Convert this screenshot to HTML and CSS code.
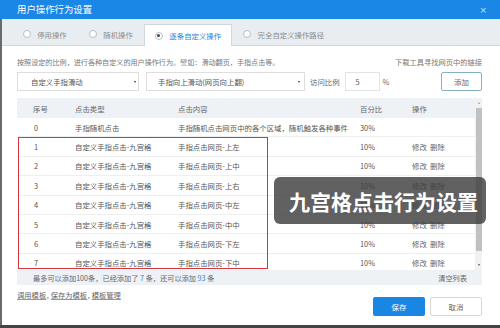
FILE: index.html
```html
<!DOCTYPE html>
<html lang="zh-CN">
<head>
<meta charset="utf-8">
<title>用户操作行为设置</title>
<link rel="stylesheet" href="styles.css">
</head>
<body>
<div class="dialog">
  <div class="titlebar">
    <span class="title">用户操作行为设置</span>
    <span class="close">×</span>
  </div>
  <div class="main">
    <div class="tabs">
      <div class="tab"><span class="radio"></span>停用操作</div>
      <div class="tab"><span class="radio"></span>随机操作</div>
      <div class="tab active"><span class="radio on"></span>逐条自定义操作</div>
      <div class="tab"><span class="radio"></span>完全自定义操作路径</div>
    </div>
    <div class="body">
      <div class="desc">
        <span>按照设定的比例，进行各种自定义的用户操作行为。譬如：滑动翻页，手指点击等。</span>
        <span class="dl">下载工具寻找网页中的链接</span>
      </div>
      <div class="controls">
        <div class="select s1"><span>自定义手指滑动</span><span class="arrow"></span></div>
        <div class="select s2"><span>手指向上滑动(网页向上翻)</span><span class="arrow"></span></div>
        <span class="lbl">访问比例</span>
        <div class="input">5</div>
        <span class="pct">%</span>
        <div class="btn-add">添加</div>
      </div>
      <div class="table">
        <div class="tmain">
          <div class="row head">
            <span class="c1">序号</span><span>点击类型</span><span>点击内容</span><span>百分比</span><span>操作</span>
          </div>
          <div class="row"><span class="c1">0</span><span>手指随机点击</span><span>手指随机点击网页中的各个区域，随机触发各种事件</span><span>30%</span><span></span></div>
          <div class="row"><span class="c1">1</span><span>自定义手指点击-九宫格</span><span>手指点击网页-上左</span><span>10%</span><span class="ops">修改&nbsp;&nbsp;删除</span></div>
          <div class="row"><span class="c1">2</span><span>自定义手指点击-九宫格</span><span>手指点击网页-上中</span><span>10%</span><span class="ops">修改&nbsp;&nbsp;删除</span></div>
          <div class="row"><span class="c1">3</span><span>自定义手指点击-九宫格</span><span>手指点击网页-上右</span><span>10%</span><span class="ops">修改&nbsp;&nbsp;删除</span></div>
          <div class="row"><span class="c1">4</span><span>自定义手指点击-九宫格</span><span>手指点击网页-中左</span><span>10%</span><span class="ops">修改&nbsp;&nbsp;删除</span></div>
          <div class="row"><span class="c1">5</span><span>自定义手指点击-九宫格</span><span>手指点击网页-中中</span><span>10%</span><span class="ops">修改&nbsp;&nbsp;删除</span></div>
          <div class="row"><span class="c1">6</span><span>自定义手指点击-九宫格</span><span>手指点击网页-下左</span><span>10%</span><span class="ops">修改&nbsp;&nbsp;删除</span></div>
          <div class="row"><span class="c1">7</span><span>自定义手指点击-九宫格</span><span>手指点击网页-下中</span><span>10%</span><span class="ops">修改&nbsp;&nbsp;删除</span></div>
        </div>
        <div class="sb">
          <span class="sb-btn"><span class="tri up"></span></span>
          <span class="thumb"></span>
          <span class="sb-fill"></span>
          <span class="sb-btn"><span class="tri down"></span></span>
        </div>
      </div>
      <div class="tfoot">
        <span>最多可以添加100条，已经添加了 <em>7</em> 条，还可以添加 <em>93</em> 条</span>
        <span>清空列表</span>
      </div>
      <div class="bottom">
        <div class="links"><a>调用模板</a><span class="sep">,</span><a>保存为模板</a><span class="sep">,</span><a>模板管理</a></div>
        <div class="actions">
          <div class="btn save">保存</div>
          <div class="btn cancel">取消</div>
        </div>
      </div>
    </div>
  </div>
  <div class="redbox"></div>
  <div class="overlay">九宫格点击行为设置</div>
</div>
</body>
</html>
```

FILE: styles.css
```css
html, body {
  margin: 0;
  padding: 0;
}
body {
  width: 500px;
  height: 328px;
  overflow: hidden;
  font-family: "Noto Sans CJK SC", "Noto Sans", sans-serif;
  background: #fff;
}
.dialog {
  position: relative;
  width: 500px;
  height: 328px;
  box-sizing: border-box;
  border-bottom: 3px solid #444;
  display: flex;
  flex-direction: column;
  background: #fff;
}
.titlebar {
  height: 19px;
  flex: none;
  background: #1a86e6;
  color: #fff;
  display: flex;
  align-items: center;
  justify-content: space-between;
  padding: 0 13px 0 17px;
}
.title {
  font-size: 9.4px;
  line-height: 19px;
}
.close {
  font-size: 9px;
  color: #cfe4fa;
  font-family: "DejaVu Sans", sans-serif;
}
.main {
  flex: 1;
  border-left: 2px solid #6a6a6a;
  display: flex;
  flex-direction: column;
}
.tabs {
  height: 27px;
  flex: none;
  box-sizing: border-box;
  background: #e8edf2;
  border-bottom: 1px solid #cdd8e3;
  display: flex;
  align-items: flex-end;
  padding-left: 9.7px;
}
.tab {
  height: 22px;
  display: flex;
  align-items: center;
  gap: 6.5px;
  padding: 0 11px;
  font-size: 7.4px;
  color: #8d8d8d;
  box-sizing: border-box;
}
.tab.active {
  background: #fff;
  border: 1px solid #cdd8e3;
  border-bottom: none;
  height: 22px;
  margin-bottom: -1px;
  padding: 0 10px;
  color: #2a7fd8;
}
.radio {
  width: 8px;
  height: 8px;
  border: 1px solid #bcbcbc;
  border-radius: 50%;
  box-sizing: border-box;
  background: #fff;
  display: flex;
  align-items: center;
  justify-content: center;
}
.radio.on::after {
  content: "";
  width: 3px;
  height: 3px;
  border-radius: 50%;
  background: #444;
}
.body {
  padding: 10px 18px 0 15px;
  display: flex;
  flex-direction: column;
}
.desc {
  display: flex;
  justify-content: space-between;
  font-size: 7.1px;
  line-height: 12px;
  height: 12px;
  color: #777;
}
.desc .dl {
  font-size: 7.25px;
}
.controls {
  margin-top: 4px;
  height: 19px;
  display: flex;
  align-items: center;
  font-size: 7.4px;
  color: #555;
}
.select {
  height: 19px;
  box-sizing: border-box;
  border: 1px solid #dedede;
  display: flex;
  align-items: center;
  justify-content: space-between;
}
.s1 {
  width: 122px;
  padding: 0 2px 0 13px;
}
.s2 {
  width: 159px;
  margin-left: 7px;
  padding: 0 4px 0 11px;
}
.arrow {
  width: 0;
  height: 0;
  border-left: 1.8px solid transparent;
  border-right: 1.8px solid transparent;
  border-top: 2.6px solid #333;
}
.lbl {
  margin-left: 5px;
  color: #666;
}
.input {
  width: 35px;
  height: 19px;
  box-sizing: border-box;
  border: 1px solid #e3e3e3;
  margin-left: 5px;
  padding-left: 10px;
  display: flex;
  align-items: center;
}
.pct {
  margin-left: 3px;
  color: #666;
}
.btn-add {
  margin-left: auto;
  width: 41px;
  height: 19px;
  box-sizing: border-box;
  border: 1px solid #86b1c4;
  border-radius: 2px;
  display: flex;
  align-items: center;
  justify-content: center;
  color: #666;
}
.table {
  margin-top: 7px;
  height: 172px;
  display: flex;
  overflow: hidden;
}
.tmain {
  flex: 1;
  overflow: hidden;
}
.row {
  display: grid;
  grid-template-columns: 58px 103px 182px 52px 1fr;
  align-items: center;
  height: 19.4px;
  box-sizing: border-box;
  border-bottom: 1px solid #efefef;
  font-size: 7.4px;
  color: #555;
  white-space: nowrap;
}
.row.head {
  height: 20px;
  background: #eef1f5;
  border-bottom: none;
  color: #666;
}
.row .c1 {
  padding-left: 17px;
}
.row.head .c1 {
  padding-left: 16px;
}
.ops {
  color: #666;
}
.sb {
  width: 7px;
  background: #f1f1f1;
  display: flex;
  flex-direction: column;
  align-items: center;
}
.sb-btn {
  height: 10px;
  width: 7px;
  display: flex;
  align-items: center;
  justify-content: center;
}
.tri {
  width: 0;
  height: 0;
  border-left: 1.8px solid transparent;
  border-right: 1.8px solid transparent;
}
.tri.up {
  border-bottom: 2.5px solid #9a9a9a;
}
.tri.down {
  border-top: 2.5px solid #555;
}
.thumb {
  width: 6px;
  height: 143px;
  background: #c1c1c1;
}
.sb-fill {
  flex: 1;
}
.tfoot {
  height: 15px;
  background: #eef2f6;
  display: flex;
  align-items: center;
  justify-content: space-between;
  padding: 0 15px 0 16px;
  font-size: 7.2px;
  color: #666;
}
.tfoot em {
  font-style: normal;
  color: #2b86d8;
}
.bottom {
  margin-top: 3px;
  display: flex;
  justify-content: space-between;
  align-items: flex-start;
}
.links {
  font-size: 7.3px;
  line-height: 14px;
  color: #666;
  display: flex;
}
.links a {
  text-decoration: underline;
  text-decoration-color: #999;
}
.links .sep {
  width: 4px;
  padding-left: 0.5px;
}
.links a + .sep + a {
  margin-left: 0;
}
.actions {
  margin-top: 9px;
  display: flex;
  gap: 5px;
}
.btn {
  height: 19px;
  box-sizing: border-box;
  border-radius: 2px;
  display: flex;
  align-items: center;
  justify-content: center;
  font-size: 7.4px;
}
.btn.save {
  width: 52px;
  background: #1a86e4;
  color: #fff;
}
.btn.cancel {
  width: 52px;
  border: 1px solid #d8d8d8;
  color: #666;
  background: #fff;
}
.redbox {
  position: absolute;
  left: 18px;
  top: 136.5px;
  width: 250px;
  height: 132px;
  box-sizing: border-box;
  border: 1.5px solid #d8343b;
  pointer-events: none;
}
.overlay {
  position: absolute;
  left: 274px;
  top: 177px;
  width: 212px;
  height: 47px;
  border-radius: 6px;
  background: rgba(62, 62, 62, 0.82);
  color: #fff;
  font-weight: bold;
  font-size: 21px;
  display: flex;
  align-items: center;
  justify-content: center;
  padding-left: 7px;
  box-sizing: border-box;
}
```
